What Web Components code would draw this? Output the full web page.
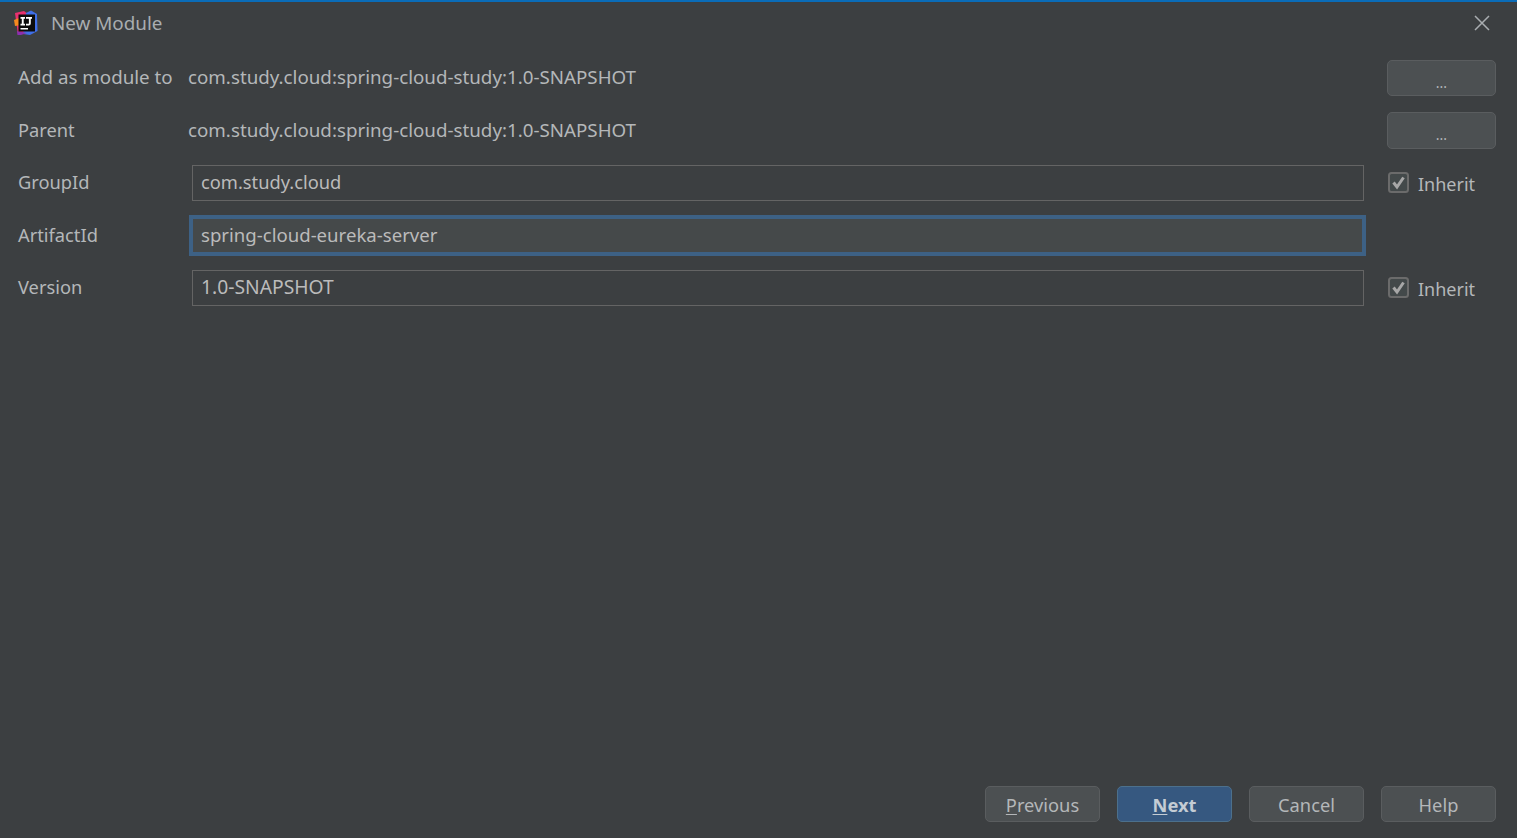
<!DOCTYPE html>
<html>
<head>
<meta charset="utf-8">
<title>New Module</title>
<style>
    html, body { margin: 0; height: 100%; background: #3c3f41; }
    body { font-family: "Noto Sans", "Open Sans", sans-serif; font-size: 18.300px; color: #bbbbbb; overflow: hidden; }
</style>
</head>
<body>
<ij-dialog>
    <ij-title-bar slot="title">New Module</ij-title-bar>

    <ij-label style="font-size: 18.750px">Add as module to</ij-label>
    <ij-value>com.study.cloud:spring-cloud-study:1.0-SNAPSHOT</ij-value>
    <ij-button class="side">...</ij-button>

    <ij-label>Parent</ij-label>
    <ij-value>com.study.cloud:spring-cloud-study:1.0-SNAPSHOT</ij-value>
    <ij-button class="side">...</ij-button>

    <ij-label>GroupId</ij-label>
    <ij-text-field value="com.study.cloud"></ij-text-field>
    <ij-checkbox checked>Inherit</ij-checkbox>

    <ij-label>ArtifactId</ij-label>
    <ij-text-field value="spring-cloud-eureka-server" focused style="font-size: 18.600px"></ij-text-field>
    <span></span>

    <ij-label>Version</ij-label>
    <ij-text-field value="1.0-SNAPSHOT" style="font-size: 19.300px"></ij-text-field>
    <ij-checkbox checked>Inherit</ij-checkbox>

    <ij-button slot="footer" mnemonic="P" rest="revious"></ij-button>
    <ij-button slot="footer" mnemonic="N" rest="ext" primary></ij-button>
    <ij-button slot="footer">Cancel</ij-button>
    <ij-button slot="footer">Help</ij-button>
</ij-dialog>

<script>
const dialogTemplate = document.createElement('template');
dialogTemplate.innerHTML = `
<style>
    :host {
        display: flex;
        flex-direction: column;
        height: 838px;
        box-sizing: border-box;
        border-top: 2px solid #0a6cb8;
        background: #3c3f41;
    }
    .form {
        display: grid;
        grid-template-columns: 170px 1199px 109px;
        grid-template-rows: 36px 37px 36px 37px 36px;
        row-gap: 16px;
        padding: 16px 21px 0 18px;
        align-items: center;
    }
    .footer {
        margin-top: auto;
        display: flex;
        justify-content: flex-end;
        gap: 17px;
        padding: 0 21px 16px 0;
    }
</style>
<slot name="title"></slot>
<div class="form"><slot></slot></div>
<div class="footer"><slot name="footer"></slot></div>
`;

class IjDialog extends HTMLElement {
    constructor() {
        super();
        this.attachShadow({ mode: 'open' });
        this.shadowRoot.appendChild(dialogTemplate.content.cloneNode(true));
    }
}

const titleTemplate = document.createElement('template');
titleTemplate.innerHTML = `
<style>
    :host {
        display: flex;
        align-items: center;
        height: 42px;
        padding: 0 26px 0 13px;
        font-size: 18.850px;
        color: #a9adb0;
    }
    .logo { width: 26px; height: 26px; margin-right: 12px; flex: none; }
    .text { flex: 1; }
    .close { width: 18px; height: 18px; flex: none; }
</style>
<svg class="logo" viewBox="0 0 26 26">
    <path d="M2 3 L11 1 L15 4 L15 22 L5 25 Z" fill="#e8306f"/>
    <path d="M1 10 L6 8 L8 15 L2 16 Z" fill="#f58a1f"/>
    <path d="M13 3 L18 0.500 L24 4 L24.500 21 L17 25 L10 24 Z" fill="#3f6fe8"/>
    <path d="M4 21 L14 23 L8 25 L4.500 25 Z" fill="#8a2fb0"/>
    <rect x="5.500" y="4.500" width="16.500" height="17" fill="#0c0c0c"/>
    <path d="M7.500 7 H12 V8.700 H10.700 V13.800 H12 V15.500 H7.500 V13.800 H8.800 V8.700 H7.500 Z" fill="#fff"/>
    <path d="M13 7 H19 V8.700 H17.800 V13.400 Q17.800 15.500 15.700 15.500 H13 V13.800 H15.300 Q15.900 13.800 15.900 13.200 V8.700 H13 Z" fill="#fff"/>
    <rect x="7.500" y="18" width="7.500" height="1.500" fill="#fff"/>
</svg>
<span class="text"><slot></slot></span>
<svg class="close" viewBox="0 0 18 18"><path d="M2 2 L16 16 M16 2 L2 16" stroke="#a9adb0" stroke-width="1.500" fill="none"/></svg>
`;

class IjTitleBar extends HTMLElement {
    constructor() {
        super();
        this.attachShadow({ mode: 'open' });
        this.shadowRoot.appendChild(titleTemplate.content.cloneNode(true));
    }
}

const labelTemplate = document.createElement('template');
labelTemplate.innerHTML = `
<style>
    :host { display: block; white-space: nowrap; color: #b4b7b9; margin-top: -3px; }
</style>
<slot></slot>
`;

class IjLabel extends HTMLElement {
    constructor() {
        super();
        this.attachShadow({ mode: 'open' });
        this.shadowRoot.appendChild(labelTemplate.content.cloneNode(true));
    }
}

const valueTemplate = document.createElement('template');
valueTemplate.innerHTML = `
<style>
    :host { display: block; white-space: nowrap; color: #b4b7b9; font-size: 18.750px; margin-top: -3px; }
</style>
<slot></slot>
`;

class IjValue extends HTMLElement {
    constructor() {
        super();
        this.attachShadow({ mode: 'open' });
        this.shadowRoot.appendChild(valueTemplate.content.cloneNode(true));
    }
}

const fieldTemplate = document.createElement('template');
fieldTemplate.innerHTML = `
<style>
    :host {
        display: flex;
        align-items: center;
        box-sizing: border-box;
        height: 36px;
        margin-left: 4px;
        margin-right: 23px;
        padding: 0 0 3px 8px;
        border: 1px solid #646464;
        background: #3c3f41;
        color: #bbbbbb;
        white-space: nowrap;
    }
    :host([focused]) {
        height: 35px;
        margin-right: 24px;
        padding-bottom: 2px;
        background: #45494a;
        border-color: #3d6185;
        box-shadow: 0 0 0 3px #3d6185;
    }
</style>
<span></span>
`;

class IjTextField extends HTMLElement {
    constructor() {
        super();
        this.attachShadow({ mode: 'open' });
        this.shadowRoot.appendChild(fieldTemplate.content.cloneNode(true));
        this.shadowRoot.querySelector('span').innerText = this.getAttribute('value');
    }
}

const checkboxTemplate = document.createElement('template');
checkboxTemplate.innerHTML = `
<style>
    :host {
        display: flex;
        align-items: center;
        gap: 9px;
        margin-left: 1px;
        margin-top: 1px;
        font-size: 18px;
        color: #b4b7b9;
    }
    svg { width: 21px; height: 21px; flex: none; margin-top: -3px; }
</style>
<svg viewBox="0 0 21 21">
    <rect x="1" y="1" width="19" height="19" rx="2.500" fill="#43494a" stroke="#6b6b6b" stroke-width="2"/>
    <path d="M5.500 10.500 L9 15 L15.500 5.500" stroke="#a7a7a7" stroke-width="3" fill="none"/>
</svg>
<slot></slot>
`;

class IjCheckbox extends HTMLElement {
    constructor() {
        super();
        this.attachShadow({ mode: 'open' });
        this.shadowRoot.appendChild(checkboxTemplate.content.cloneNode(true));
    }
}

const buttonTemplate = document.createElement('template');
buttonTemplate.innerHTML = `
<style>
    :host {
        display: flex;
        align-items: center;
        justify-content: center;
        box-sizing: border-box;
        width: 115px;
        height: 36px;
        padding-top: 1px;
        border: 1.500px solid #5a5d5f;
        border-radius: 5px;
        background: #4c5052;
        color: #b4b7b9;
        white-space: nowrap;
    }
    :host(.side) { width: 109px; height: 100%; font-size: 14px; padding-top: 8px; }
    :host([primary]) {
        background: #365880;
        border-color: #4c708c;
        color: #c4ccd4;
        font-weight: 700;
    }
    u { text-underline-offset: 2px; }
</style>
<u></u><span><slot></slot></span>
`;

class IjButton extends HTMLElement {
    constructor() {
        super();
        this.attachShadow({ mode: 'open' });
        this.shadowRoot.appendChild(buttonTemplate.content.cloneNode(true));
        this.shadowRoot.querySelector('u').innerText = this.getAttribute('mnemonic') || '';
        if (this.getAttribute('rest')) {
            this.shadowRoot.querySelector('span').innerText = this.getAttribute('rest');
        }
    }
}

customElements.define('ij-dialog', IjDialog);
customElements.define('ij-title-bar', IjTitleBar);
customElements.define('ij-label', IjLabel);
customElements.define('ij-value', IjValue);
customElements.define('ij-text-field', IjTextField);
customElements.define('ij-checkbox', IjCheckbox);
customElements.define('ij-button', IjButton);
</script>
</body>
</html>
